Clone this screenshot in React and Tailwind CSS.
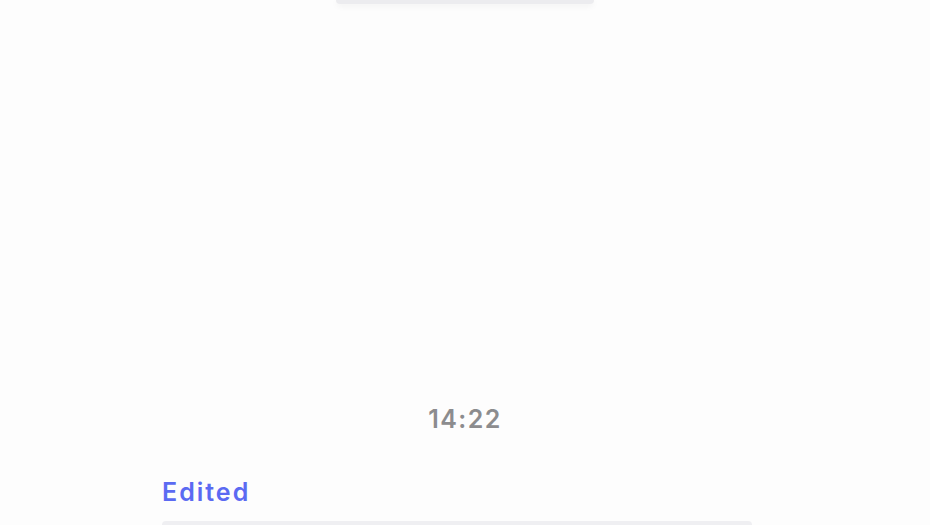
export default function App() {
  return (
    <div
      className="flex h-[525px] w-[930px] flex-col overflow-hidden bg-[#fdfdfd]"
      style={{ fontFamily: "Inter, 'Noto Sans', sans-serif" }}
    >
      <div className="mx-auto h-[4px] w-[258px] shrink-0 rounded-b-[10px] bg-[#ececef] shadow-[0_2px_6px_rgba(0,0,0,0.06)]" />
      <div className="flex-1" />
      <div className="flex justify-center">
        <span className="text-[25px] font-semibold leading-[30px] tracking-[1.4px] text-[#8c8c8e]">
          14:22
        </span>
      </div>
      <div className="h-[43px] shrink-0" />
      <div className="pl-[162px]">
        <span className="text-[25px] font-semibold leading-[30px] tracking-[2px] text-[#5b6af2]">
          Edited
        </span>
      </div>
      <div className="h-[14px] shrink-0" />
      <div className="ml-[162px] h-[4px] w-[590px] shrink-0 rounded-t-[8px] bg-[#efeff2]" />
    </div>
  );
}
